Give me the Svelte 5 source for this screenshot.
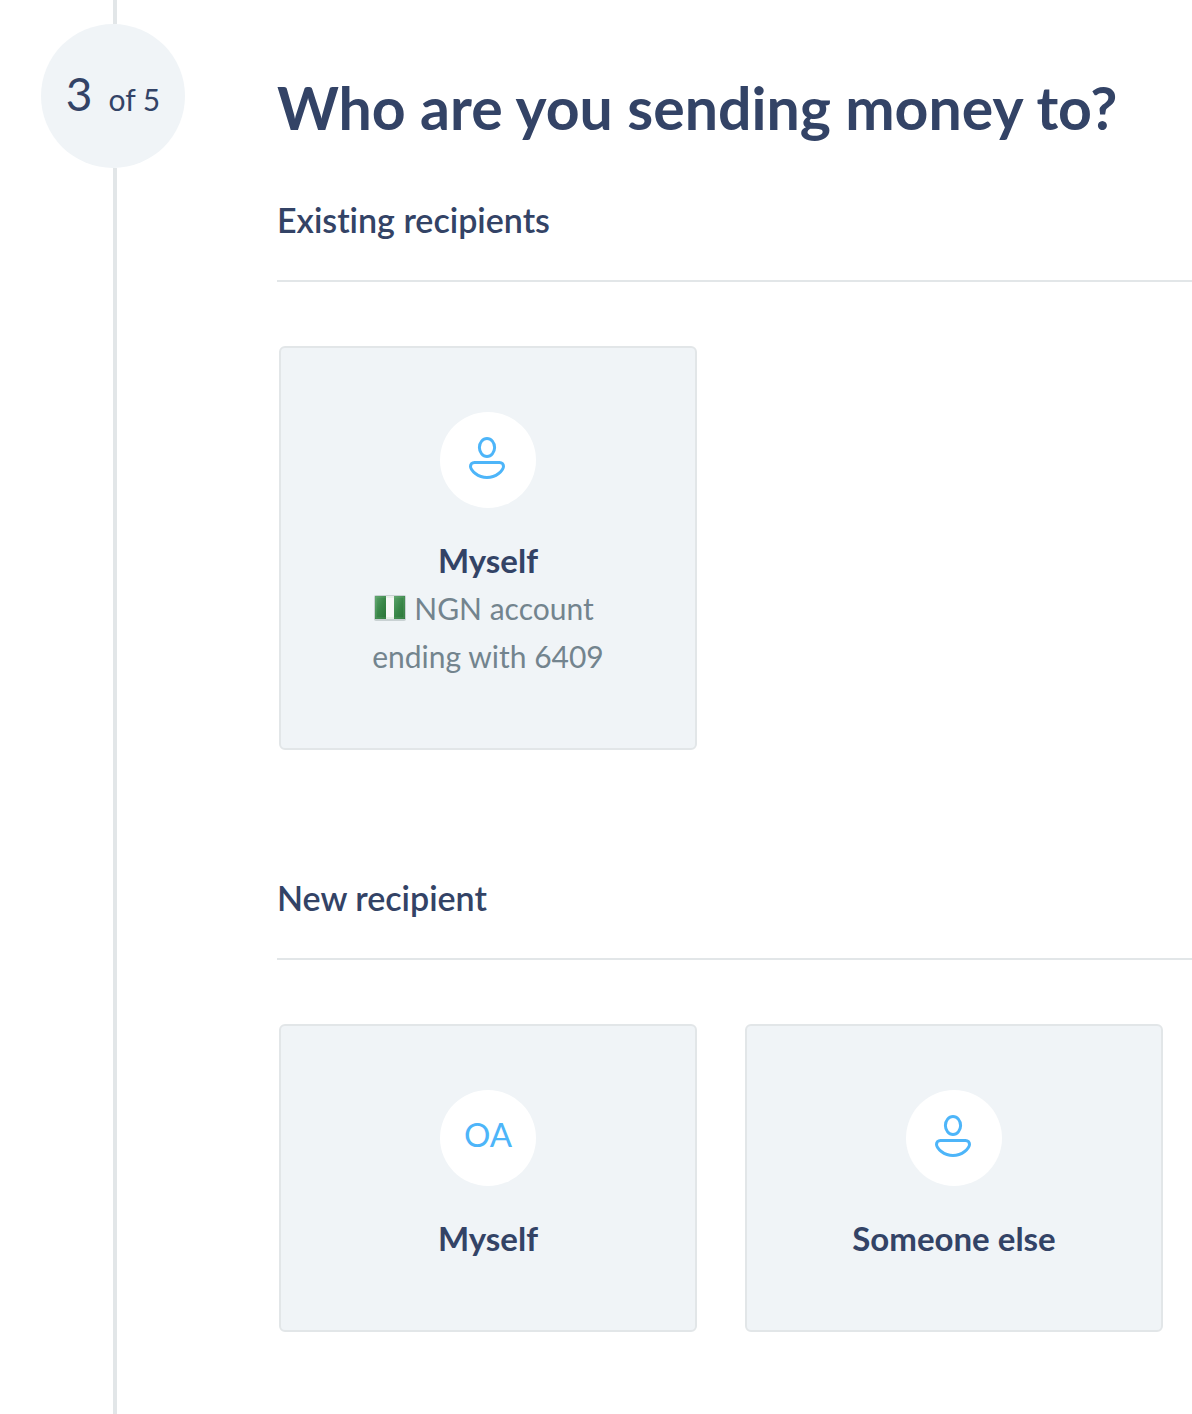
<script>
  const step = 3;
  const totalSteps = 5;

  const sections = [
    {
      title: 'Existing recipients',
      recipients: [{ name: 'Myself', account: { currency: 'NGN', ending: '6409' } }]
    },
    {
      title: 'New recipient',
      recipients: [{ name: 'Myself', initials: 'OA' }, { name: 'Someone else' }]
    }
  ];
</script>

<div class="page">
  <aside class="rail">
    <div class="step">
      <span class="current">{step}</span>
      <span class="total">of {totalSteps}</span>
    </div>
  </aside>

  <main>
    <h1>Who are you sending money to?</h1>

    {#each sections as section}
      <section>
        <h2>{section.title}</h2>
        <div class="cards">
          {#each section.recipients as recipient}
            <button class="card" type="button">
              <span class="avatar">
                {#if recipient.initials}
                  <span class="initials">{recipient.initials}</span>
                {:else}
                  <svg width="48" height="48" viewBox="0 0 48 48" aria-hidden="true">
                    <ellipse cx="23" cy="11.5" rx="7.6" ry="9" />
                    <path d="M10.5 26.5H35.5C38 26.5 39.5 28.2 39.5 30.3C39.5 34.5 32 41.5 23 41.5S6.5 34.5 6.5 30.3C6.5 28.2 8 26.5 10.5 26.5Z" />
                  </svg>
                {/if}
              </span>
              <span class="name">{recipient.name}</span>
              {#if recipient.account}
                <span class="account currency">
                  <svg class="flag" width="32" height="26" viewBox="0 0 32 26" aria-hidden="true">
                    <defs>
                      <linearGradient id="flag-green" x1="0" y1="0" x2="1" y2="1">
                        <stop offset="0" stop-color="#5ba36a" />
                        <stop offset="0.5" stop-color="#3a8749" />
                        <stop offset="1" stop-color="#2a7437" />
                      </linearGradient>
                    </defs>
                    <rect width="32" height="26" rx="2" fill="#c9d1d3" />
                    <rect x="1" y="1" width="11" height="23" fill="url(#flag-green)" />
                    <rect x="20" y="1" width="11" height="23" fill="url(#flag-green)" />
                    <rect x="12" y="1" width="8" height="23" fill="#f8f8f8" />
                    <rect x="2" y="2" width="28" height="21" fill="none" stroke="#8abf93" stroke-opacity="0.3" />
                  </svg>
                  {recipient.account.currency} account
                </span>
                <span class="account">ending with {recipient.account.ending}</span>
              {/if}
            </button>
          {/each}
        </div>
      </section>
    {/each}
  </main>
</div>

<style>
  :global(body) {
    margin: 0;
    background: #fff;
  }

  .page {
    display: flex;
    gap: 92px;
    min-height: 100vh;
    padding-left: 41px;
    box-sizing: border-box;
    font-family: Lato, sans-serif;
    font-variant-ligatures: none;
    color: #334366;
  }

  .rail {
    display: flex;
    flex-direction: column;
    flex: none;
    width: 144px;
  }

  .rail::before,
  .rail::after {
    content: '';
    width: 4px;
    height: 24px;
    margin-left: 72px;
    background: #e2e6e8;
  }

  .rail::after {
    flex: 1;
  }

  .step {
    display: flex;
    align-items: baseline;
    justify-content: center;
    gap: 16px;
    height: 144px;
    border-radius: 50%;
    background: #f0f4f7;
    line-height: 140px;
  }

  .current {
    font-size: 46px;
  }

  .total {
    font-size: 30px;
  }

  main {
    flex: 1;
    min-width: 0;
    padding: 72px 0 82px;
  }

  h1 {
    margin: 0 0 56px;
    font-size: 59px;
    font-weight: 700;
    line-height: 72px;
  }

  section + section {
    margin-top: 128px;
  }

  h2 {
    margin: 0;
    padding-bottom: 40px;
    border-bottom: 2px solid #e2e6e8;
    font-size: 34px;
    font-weight: 600;
    line-height: 40px;
  }

  .cards {
    display: grid;
    grid-template-columns: 1fr 1fr;
    gap: 48px;
    padding: 64px 29px 0 2px;
  }

  .card {
    display: flex;
    flex-direction: column;
    align-items: center;
    padding: 64px 32px 68px;
    border: 2px solid #e2e6e8;
    border-radius: 6px;
    background: #f0f4f7;
    font: inherit;
    color: inherit;
    cursor: pointer;
  }

  .card:hover {
    border-color: #4db5f9;
  }

  .avatar {
    display: flex;
    align-items: center;
    justify-content: center;
    width: 96px;
    height: 96px;
    margin-bottom: 28px;
    border-radius: 50%;
    background: #fff;
    color: #4db5f9;
  }

  .avatar svg {
    fill: none;
    stroke: currentColor;
    stroke-width: 3;
  }

  .initials {
    padding-bottom: 8px;
    font-size: 33px;
    line-height: 40px;
  }

  .name {
    font-size: 33px;
    font-weight: 700;
    line-height: 48px;
  }

  .account {
    color: #73848e;
    font-size: 30px;
    line-height: 48px;
  }

  .currency {
    display: flex;
    align-items: center;
    gap: 8px;
    padding-right: 8px;
  }
</style>
